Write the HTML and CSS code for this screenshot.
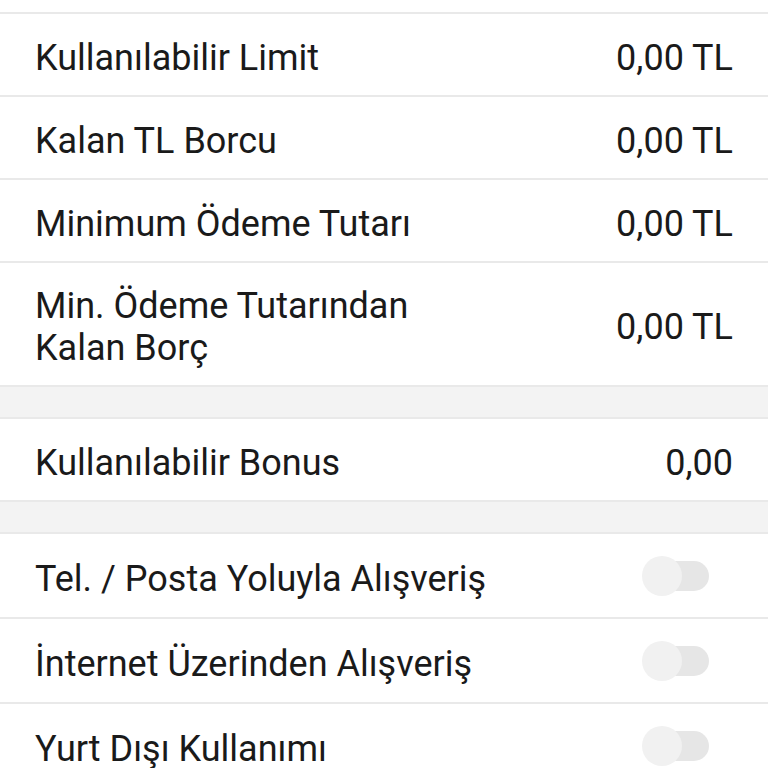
FILE: index.html
```html
<!DOCTYPE html>
<html lang="tr">
<head>
    <meta charset="UTF-8">
    <meta name="viewport" content="width=device-width, initial-scale=1.0">
    <title>Kart Detayı</title>
    <link rel="stylesheet" href="styles.css">
</head>
<body>
    <div class="top-space"></div>

    <div class="group">
        <div class="row">
            <span class="label">Kullanılabilir Limit</span>
            <span class="value">0,00 TL</span>
        </div>
        <div class="row">
            <span class="label">Kalan TL Borcu</span>
            <span class="value">0,00 TL</span>
        </div>
        <div class="row">
            <span class="label">Minimum Ödeme Tutarı</span>
            <span class="value">0,00 TL</span>
        </div>
        <div class="row row-tall">
            <span class="label">Min. Ödeme Tutarından<br>Kalan Borç</span>
            <span class="value">0,00 TL</span>
        </div>
    </div>

    <div class="spacer"></div>

    <div class="group">
        <div class="row">
            <span class="label">Kullanılabilir Bonus</span>
            <span class="value">0,00</span>
        </div>
    </div>

    <div class="spacer"></div>

    <div class="group">
        <div class="row row-switch">
            <span class="label">Tel. / Posta Yoluyla Alışveriş</span>
            <label class="switch">
                <input type="checkbox">
                <span class="slider"></span>
            </label>
        </div>
        <div class="row row-switch">
            <span class="label">İnternet Üzerinden Alışveriş</span>
            <label class="switch">
                <input type="checkbox">
                <span class="slider"></span>
            </label>
        </div>
        <div class="row row-switch">
            <span class="label">Yurt Dışı Kullanımı</span>
            <label class="switch">
                <input type="checkbox">
                <span class="slider"></span>
            </label>
        </div>
    </div>
</body>
</html>
```

FILE: styles.css
```css
body {
    margin: 0;
    font-family: 'Roboto', 'Noto Sans', sans-serif;
    background-color: #fff;
    color: #1a1a1a;
    overflow: hidden;
}

.top-space {
    height: 12px;
    background-color: #fff;
}

.group {
    border-top: 2px solid #e9e9e9;
    background-color: #fff;
}

.spacer {
    height: 30px;
    background-color: #f3f3f3;
}

.row {
    display: flex;
    justify-content: space-between;
    align-items: center;
    height: 81px;
    padding: 0 35px;
    border-bottom: 2px solid #e9e9e9;
    font-size: 36px;
    line-height: 42px;
}

.row-tall {
    height: 122px;
}

.row-switch {
    height: 83px;
}

.label,
.value {
    padding-top: 6px;
}

/* Toggle */
.switch {
    position: relative;
    display: inline-block;
    width: 67px;
    height: 42px;
    margin-right: 24px;
}

.switch input {
    opacity: 0;
    width: 0;
    height: 0;
}

.slider {
    position: absolute;
    top: 6px;
    left: 10px;
    right: 0;
    height: 30px;
    background-color: #e6e6e6;
    border-radius: 15px;
}

.slider:before {
    position: absolute;
    content: "";
    width: 40px;
    height: 40px;
    left: -10px;
    top: -5px;
    background-color: #f1f1f1;
    border-radius: 50%;
}
```
